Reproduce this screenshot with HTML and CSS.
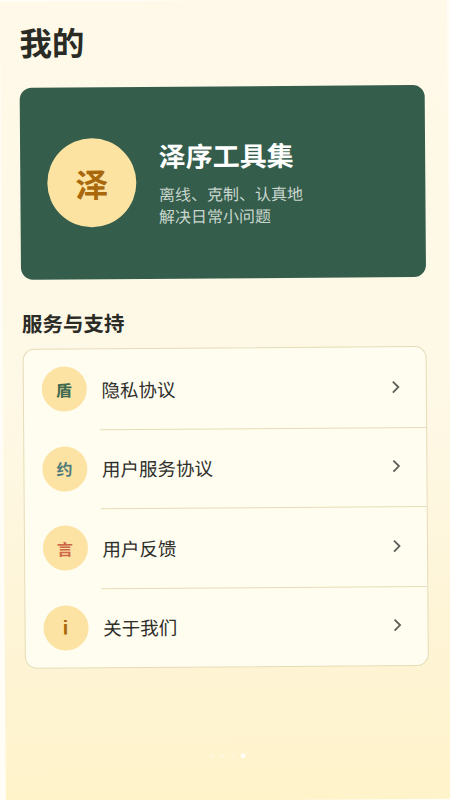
FILE: index.html
```html
<!DOCTYPE html>
<html lang="zh-CN">
<head>
<meta charset="utf-8">
<title>我的</title>
<link rel="stylesheet" href="styles.css">
</head>
<body>
<main class="page">
  <h1 class="title">我的</h1>
  <section class="hero">
    <div class="avatar">泽</div>
    <div class="hero-text">
      <div class="hero-name">泽序工具集</div>
      <p class="hero-desc">离线、克制、认真地<br>解决日常小问题</p>
    </div>
  </section>
  <h2 class="section-title">服务与支持</h2>
  <section class="list">
    <a class="row"><span class="badge green">盾</span><span class="label">隐私协议</span><svg class="chev" viewBox="0 0 10 14"><path d="M2 1.5 7.5 7 2 12.5"/></svg></a>
    <a class="row"><span class="badge blue">约</span><span class="label">用户服务协议</span><svg class="chev" viewBox="0 0 10 14"><path d="M2 1.5 7.5 7 2 12.5"/></svg></a>
    <a class="row"><span class="badge red">言</span><span class="label">用户反馈</span><svg class="chev" viewBox="0 0 10 14"><path d="M2 1.5 7.5 7 2 12.5"/></svg></a>
    <a class="row"><span class="badge amber">i</span><span class="label">关于我们</span><svg class="chev" viewBox="0 0 10 14"><path d="M2 1.5 7.5 7 2 12.5"/></svg></a>
  </section>
  <div class="dots"><i></i><i></i><i></i><i class="on"></i></div>
</main>
</body>
</html>
```
FILE: styles.css
```css
* { box-sizing: border-box; }
html, body { margin: 0; height: 100%; overflow: hidden; background: #fffdf6; }
body { font-family: "Noto Sans CJK SC", "Noto Sans", sans-serif; }
.page {
  width: 447px;
  height: 800px;
  padding: 19px 23.5px 0 18.5px;
  display: flex;
  flex-direction: column;
  background: linear-gradient(180deg, #fef9e8 0%, #fef8e6 50%, #fef4d3 85%, #fff3ca 100%);
  transform: rotate(-0.42deg);
  transform-origin: 0 0;
  margin-top: 2px;
}
.title { margin: 0 0 0 0.5px; font-size: 32.5px; line-height: 42px; font-weight: 700; color: #2b2b26; }
.hero {
  margin-top: 24.5px;
  height: 192px;
  flex: none;
  border-radius: 12px;
  background: #345d4b;
  padding: 0 27.5px;
  display: flex;
  align-items: center;
  gap: 22.5px;
}
.avatar {
  width: 89px; height: 89px; border-radius: 50%;
  background: #fde3a1; color: #a9680b;
  font-size: 33px; font-weight: 700;
  display: flex; align-items: center; justify-content: center;
  flex: none;
}
.hero-name { font-size: 27px; line-height: 36px; font-weight: 700; color: #fff; }
.hero-desc { margin: 10px 0 0; font-size: 16px; line-height: 21.5px; color: #c9d6cd; }
.section-title { margin: 29.5px 0 0 1px; font-size: 20.5px; line-height: 28px; font-weight: 700; color: #2b2b26; }
.list {
  margin: 12px 0 0 1px;
  width: 404.5px;
  flex: none;
  border: 1px solid #e6dcb8;
  border-radius: 12px;
  background: #fefdf0;
}
.row {
  height: 79.5px;
  display: flex;
  align-items: center;
  padding: 0 25px 0 18px;
  position: relative;
}
.row + .row::before {
  content: "";
  position: absolute;
  left: 76px; right: 0; top: 0;
  border-top: 1px solid #e6dcb8;
}
.badge {
  width: 45px; height: 45px; border-radius: 50%;
  background: #fde3a3;
  font-size: 16px; font-weight: 700;
  display: flex; align-items: center; justify-content: center;
  flex: none;
}
.green { color: #3f6a50; }
.blue { color: #4f7a78; }
.red { color: #cc6647; }
.amber { color: #a9680b; font-size: 20px; font-family: "Liberation Sans", sans-serif; }
.label { margin-left: 15px; flex: 1; font-size: 18.5px; color: #2e2e2a; }
.chev { width: 10px; height: 14px; fill: none; stroke: #5e5e58; stroke-width: 1.8; }
.dots { margin: 86px 0 0 185px; display: flex; gap: 5.5px; }
.dots i { width: 5px; height: 5px; border-radius: 50%; background: #fff; opacity: .2; }
.dots i.on { opacity: .85; }
```
